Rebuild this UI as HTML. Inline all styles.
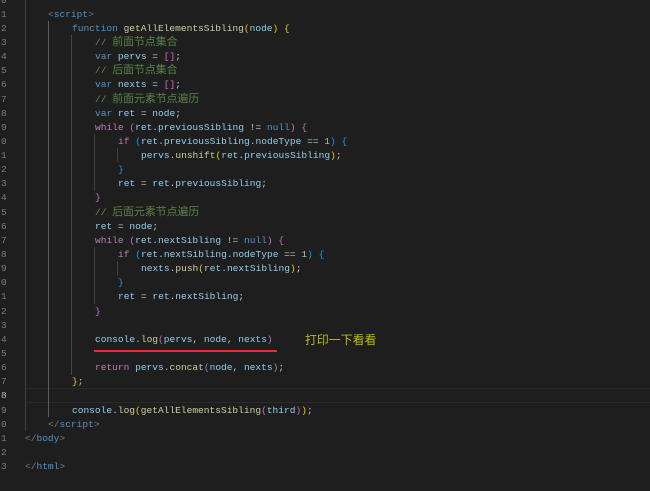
<!DOCTYPE html>
<html><head><meta charset="utf-8">
<style>
html,body{margin:0;padding:0;background:#1e1e1e;width:650px;height:491px;overflow:hidden}
body{position:relative;font-family:"Liberation Mono","Noto Sans CJK SC",monospace;font-size:9.55px;color:#9cdcfe}
#w{position:absolute;left:0;top:1px;width:650px;height:490px;filter:blur(.35px);opacity:.93}
.l{position:absolute;left:25px;white-space:pre;line-height:14px;height:14px}
.n{position:absolute;left:1px;line-height:14px;color:#858585;font-size:9.5px}
.g{position:absolute;width:1px;background:#404040}
i{font-style:normal}
.c{color:#6a9955;font-size:9.55px}
.c b{font-weight:400;font-size:10.9px;line-height:0;color:#5f8a4c;font-family:"Noto Sans CJK SC",sans-serif}
.k{color:#569cd6}.f{color:#dcdcaa}.p{color:#c586c0}.w{color:#d4d4d4}
.y{color:#ffd700}.m{color:#da70d6}.b{color:#179fff}.t{color:#808080}.h{color:#569cd6}
</style></head><body>
<div style="position:absolute;left:26px;right:0;top:388px;height:13px;border-top:1px solid #2a2a2a;border-bottom:1px solid #2a2a2a"></div>
<div class="g" style="left:25px;top:0;height:431px"></div>
<div class="g" style="left:48px;top:21px;height:396px;background:#5c5c5c"></div>
<div class="g" style="left:71px;top:35px;height:340px;background:#464646"></div>
<div class="g" style="left:94px;top:134px;height:57px"></div>
<div class="g" style="left:94px;top:247px;height:57px"></div>
<div class="g" style="left:117px;top:148px;height:14px"></div>
<div class="g" style="left:117px;top:261px;height:14px"></div>
<div id="w">
<div class="n" style="top:-7px">0</div><div class="n" style="top:7px">1</div><div class="n" style="top:21px">2</div><div class="n" style="top:35px">3</div><div class="n" style="top:49px">4</div><div class="n" style="top:63px">5</div><div class="n" style="top:77px">6</div><div class="n" style="top:92px">7</div><div class="n" style="top:106px">8</div><div class="n" style="top:120px">9</div><div class="n" style="top:134px">0</div><div class="n" style="top:148px">1</div><div class="n" style="top:162px">2</div><div class="n" style="top:176px">3</div><div class="n" style="top:190px">4</div><div class="n" style="top:205px">5</div><div class="n" style="top:219px">6</div><div class="n" style="top:233px">7</div><div class="n" style="top:247px">8</div><div class="n" style="top:261px">9</div><div class="n" style="top:275px">0</div><div class="n" style="top:289px">1</div><div class="n" style="top:304px">2</div><div class="n" style="top:318px">3</div><div class="n" style="top:332px">4</div><div class="n" style="top:346px">5</div><div class="n" style="top:360px">6</div><div class="n" style="top:374px">7</div><div class="n" style="top:388px;color:#c6c6c6">8</div><div class="n" style="top:403px">9</div><div class="n" style="top:417px">0</div><div class="n" style="top:431px">1</div><div class="n" style="top:445px">2</div><div class="n" style="top:459px">3</div>

<div class="l" style="left:48px;top:7px"><i class="t">&lt;</i><i class="h">script</i><i class="t">&gt;</i></div>
<div class="l" style="left:72px;top:21px"><i class="k">function</i> <i class="f">getAllElementsSibling</i><i class="y">(</i>node<i class="y">)</i> <i class="y">{</i></div>
<div class="l c" style="left:95px;top:35px">// <b>前面节点集合</b></div>
<div class="l" style="left:95px;top:49px"><i class="k">var</i> pervs <i class="w">=</i> <i class="m">[]</i><i class="w">;</i></div>
<div class="l c" style="left:95px;top:63px">// <b>后面节点集合</b></div>
<div class="l" style="left:95px;top:77px"><i class="k">var</i> nexts <i class="w">=</i> <i class="m">[]</i><i class="w">;</i></div>
<div class="l c" style="left:95px;top:92px">// <b>前面元素节点遍历</b></div>
<div class="l" style="left:95px;top:106px"><i class="k">var</i> ret <i class="w">=</i> node<i class="w">;</i></div>
<div class="l" style="left:95px;top:120px"><i class="p">while</i> <i class="m">(</i>ret.previousSibling <i class="w">!=</i> <i class="k">null</i><i class="m">)</i> <i class="m">{</i></div>
<div class="l" style="left:118px;top:134px"><i class="p">if</i> <i class="b">(</i>ret.previousSibling.nodeType <i class="w">==</i> <i style="color:#b5cea8">1</i><i class="b">)</i> <i class="b">{</i></div>
<div class="l" style="left:141px;top:148px">pervs.<i class="f">unshift</i><i class="y">(</i>ret.previousSibling<i class="y">)</i><i class="w">;</i></div>
<div class="l" style="left:118px;top:162px"><i class="b">}</i></div>
<div class="l" style="left:118px;top:176px">ret <i class="w">=</i> ret.previousSibling<i class="w">;</i></div>
<div class="l" style="left:95px;top:190px"><i class="m">}</i></div>
<div class="l c" style="left:95px;top:205px">// <b>后面元素节点遍历</b></div>
<div class="l" style="left:95px;top:219px">ret <i class="w">=</i> node<i class="w">;</i></div>
<div class="l" style="left:95px;top:233px"><i class="p">while</i> <i class="m">(</i>ret.nextSibling <i class="w">!=</i> <i class="k">null</i><i class="m">)</i> <i class="m">{</i></div>
<div class="l" style="left:118px;top:247px"><i class="p">if</i> <i class="b">(</i>ret.nextSibling.nodeType <i class="w">==</i> <i style="color:#b5cea8">1</i><i class="b">)</i> <i class="b">{</i></div>
<div class="l" style="left:141px;top:261px">nexts.<i class="f">push</i><i class="y">(</i>ret.nextSibling<i class="y">)</i><i class="w">;</i></div>
<div class="l" style="left:118px;top:275px"><i class="b">}</i></div>
<div class="l" style="left:118px;top:289px">ret <i class="w">=</i> ret.nextSibling<i class="w">;</i></div>
<div class="l" style="left:95px;top:304px"><i class="m">}</i></div>
<div class="l" style="left:95px;top:332px">console.<i class="f">log</i><i class="m">(</i>pervs<i class="w">,</i> node<i class="w">,</i> nexts<i class="m">)</i></div>
<div style="position:absolute;left:305px;top:331px;font:11.9px/15px 'Noto Sans CJK SC',sans-serif;color:#c4c41c;white-space:pre">打印一下看看</div>
<div class="l" style="left:95px;top:360px"><i class="p">return</i> pervs.<i class="f">concat</i><i class="m">(</i>node<i class="w">,</i> nexts<i class="m">)</i><i class="w">;</i></div>
<div class="l" style="left:72px;top:374px"><i class="y">}</i><i class="w">;</i></div>
<div class="l" style="left:72px;top:403px">console.<i class="f">log</i><i class="y">(</i><i class="f">getAllElementsSibling</i><i class="m">(</i>third<i class="m">)</i><i class="y">)</i><i class="w">;</i></div>
<div class="l" style="left:48px;top:417px"><i class="t">&lt;/</i><i class="h">script</i><i class="t">&gt;</i></div>
<div class="l" style="left:25px;top:431px"><i class="t">&lt;/</i><i class="h">body</i><i class="t">&gt;</i></div>
<div class="l" style="left:25px;top:459px"><i class="t">&lt;/</i><i class="h">html</i><i class="t">&gt;</i></div>
</div>
<div style="position:absolute;left:94px;top:350px;width:183px;height:2px;background:#ee2a2e"></div>
</body></html>
